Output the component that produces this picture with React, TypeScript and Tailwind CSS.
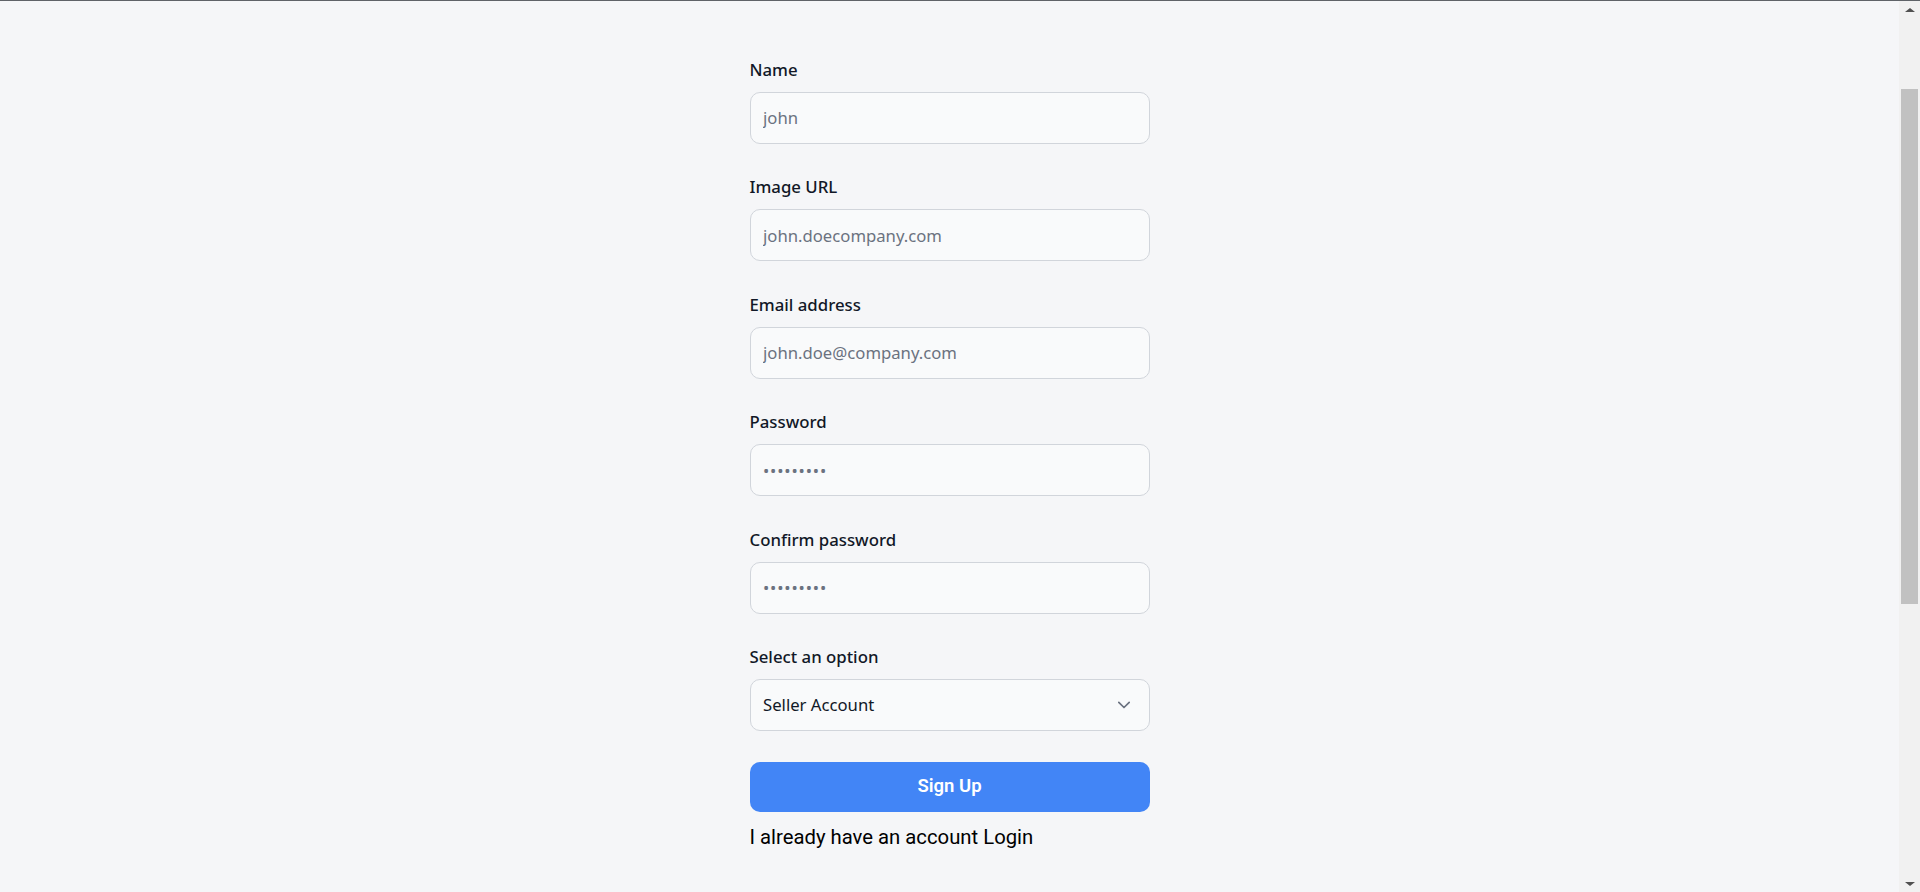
import React from "react";

const labelCls =
  "block text-[16.8px] leading-[25px] font-medium text-[#111827] mb-[10px]";
const inputCls =
  "block w-full h-[52px] rounded-[10px] border border-[#d1d5db] bg-[#f9fafb] px-[12.5px] text-[16.7px] text-[#111827] placeholder:text-[#6b7280] outline-none";

function Field({
  label,
  placeholder,
  type = "text",
}: {
  label: string;
  placeholder: string;
  type?: string;
}) {
  return (
    <div>
      <label className={labelCls}>{label}</label>
      <input
        type={type}
        placeholder={placeholder}
        className={type === "password" ? inputCls + " tracking-[0.85px]" : inputCls}
      />
    </div>
  );
}

function Scrollbar() {
  return (
    <div className="w-[21px] shrink-0 bg-[#f1f1f1] flex flex-col items-center">
      <div className="h-[17px] w-full flex items-center justify-center">
        <div className="w-0 h-0 border-l-[5px] border-r-[5px] border-b-[4px] border-l-transparent border-r-transparent border-b-[#505050]" />
      </div>
      <div className="mt-[71px] h-[515px] w-[17px] bg-[#c1c1c1]" />
      <div className="flex-1" />
      <div className="h-[17px] w-full flex items-center justify-center">
        <div className="w-0 h-0 border-l-[5px] border-r-[5px] border-t-[4px] border-l-transparent border-r-transparent border-t-[#505050]" />
      </div>
    </div>
  );
}

export default function App() {
  return (
    <div
      className="h-[892px] w-full overflow-hidden flex flex-col border-t border-[#5f6368] bg-[#f5f6f8]"
      style={{ fontFamily: '"Noto Sans", "Open Sans", sans-serif' }}
    >
      <div className="flex flex-1 min-h-0">
        <main className="flex-1 flex justify-center">
          <form
            className="w-[400px] pt-[55.5px] flex flex-col gap-[30.5px]"
            onSubmit={(e) => e.preventDefault()}
          >
            <Field label="Name" placeholder="john" />
            <Field label="Image URL" placeholder="john.doecompany.com" />
            <Field label="Email address" placeholder="john.doe@company.com" />
            <Field label="Password" placeholder="•••••••••" type="password" />
            <Field
              label="Confirm password"
              placeholder="•••••••••"
              type="password"
            />
            <div>
              <label className={labelCls}>Select an option</label>
              <div className="relative">
                <select
                  defaultValue="seller"
                  className="block w-full h-[52px] appearance-none rounded-[10px] border border-[#d1d5db] bg-[#f9fafb] px-[12.5px] text-[16.7px] text-[#111827] outline-none"
                >
                  <option value="seller">Seller Account</option>
                  <option value="buyer">Buyer Account</option>
                </select>
                <svg
                  className="pointer-events-none absolute right-[20px] top-1/2 -translate-y-1/2"
                  width="12"
                  height="8"
                  viewBox="0 0 12 8"
                  fill="none"
                >
                  <path
                    d="M0.8 1.3l5.2 5.2 5.2-5.2"
                    stroke="#6b7280"
                    strokeWidth="1.7"
                    strokeLinecap="round"
                    strokeLinejoin="round"
                  />
                </svg>
              </div>
            </div>
            <div
              className="flex flex-col"
              style={{ fontFamily: 'Roboto, "Noto Sans", sans-serif' }}
            >
              <button
                type="submit"
                className="h-[50px] w-full rounded-[10px] bg-[#4285f6] text-white text-[18.5px] font-semibold"
              >
                Sign Up
              </button>
              <p className="mt-[10px] text-[20.3px] leading-[30px] text-black">
                I already have an account <a href="#">Login</a>
              </p>
            </div>
          </form>
        </main>
        <Scrollbar />
      </div>
    </div>
  );
}
